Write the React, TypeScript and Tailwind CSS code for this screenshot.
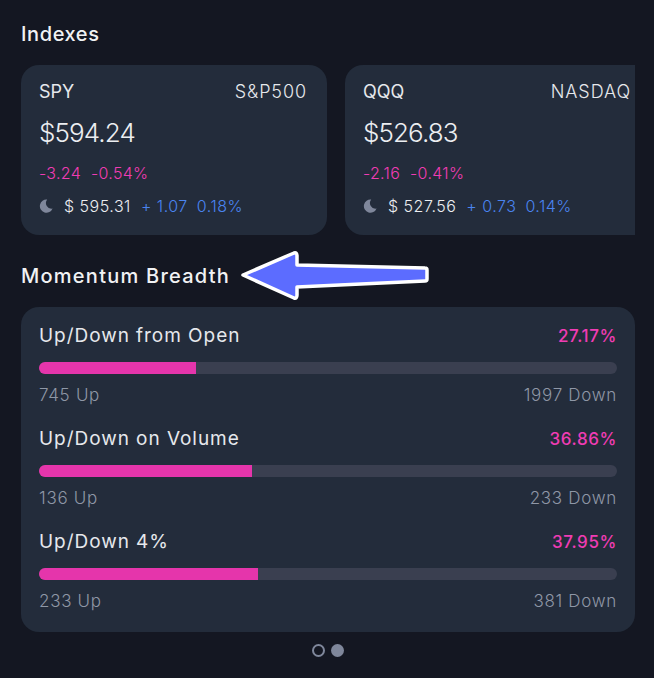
import React from 'react';

const indexes = [
  { symbol: 'SPY', name: 'S&P500', price: '$594.24', change: '-3.24', pct: '-0.54%', after: '$ 595.31', afterChange: '+ 1.07', afterPct: '0.18%' },
  { symbol: 'QQQ', name: 'NASDAQ', price: '$526.83', change: '-2.16', pct: '-0.41%', after: '$ 527.56', afterChange: '+ 0.73', afterPct: '0.14%' },
];

const breadth = [
  { label: 'Up/Down from Open', pct: '27.17%', width: 27.17, up: '745 Up', down: '1997 Down' },
  { label: 'Up/Down on Volume', pct: '36.86%', width: 36.86, up: '136 Up', down: '233 Down' },
  { label: 'Up/Down 4%', pct: '37.95%', width: 37.95, up: '233 Up', down: '381 Down' },
];

const MoonIcon = () => (
  <svg className="w-[14px] h-[14px] shrink-0" viewBox="0 0 14 14">
    <path d="M8.2 0.6 A6.6 6.6 0 1 0 13.6 9.6 A5.6 5.6 0 0 1 8.2 0.6 Z" fill="#7f879b" />
  </svg>
);

const IndexCard = ({ item }: { item: (typeof indexes)[number] }) => (
  <div className="w-[306px] h-[170px] shrink-0 rounded-[18px] bg-[#232c3b] pl-[18px] pr-[20px] pt-[15px]">
    <div className="flex justify-between text-[18px] leading-[24px] text-[#e6e8ec]">
      <span>{item.symbol}</span>
      <span className="font-light tracking-[0.9px]">{item.name}</span>
    </div>
    <div className="mt-[13px] text-[26px] leading-[32px] font-light tracking-[-0.9px] text-[#eceef1]">{item.price}</div>
    <div className="mt-[14px] flex gap-[10px] text-[16px] leading-[20px] font-light tracking-[0.3px] text-[#f03cb4]">
      <span>{item.change}</span>
      <span>{item.pct}</span>
    </div>
    <div className="mt-[13px] flex items-center text-[16px] leading-[20px] font-light tracking-[0.5px]">
      <MoonIcon />
      <span className="ml-[11px] text-[#eceef1]">{item.after}</span>
      <span className="ml-[10px] text-[#4a84f0]">{item.afterChange}</span>
      <span className="ml-[9px] text-[#4a84f0]">{item.afterPct}</span>
    </div>
  </div>
);

export default function App() {
  return (
    <div className="relative w-[654px] h-[678px] overflow-hidden bg-[#141722] font-['Inter',sans-serif]">
      <div className="pl-[21px] pr-[19px] pt-[21px]">
        <h2 className="text-[20px] leading-[26px] font-medium tracking-[0.6px] text-[#f1f2f4]">Indexes</h2>

        <div className="mt-[18px] flex gap-[18px] overflow-hidden">
          {indexes.map(item => <IndexCard key={item.symbol} item={item} />)}
        </div>

        <h2 className="mt-[28px] text-[20px] leading-[26px] font-medium tracking-[1.25px] text-[#f1f2f4]">Momentum Breadth</h2>

        <div className="mt-[18px] h-[325px] rounded-[18px] bg-[#232c3b] pl-[18px] pr-[18px] pt-[16px]">
          {breadth.map(row => (
            <div key={row.label} className="h-[103px]">
              <div className="flex justify-between text-[19px] leading-[24px] pt-[1px]">
                <span className="text-[#e6e8ec] tracking-[0.95px]">{row.label}</span>
                <span className="text-[17px] font-medium tracking-[0.6px] text-[#f03cb4]">{row.pct}</span>
              </div>
              <div className="mt-[14px] h-[12px] overflow-hidden rounded-full bg-[#3a3f50]">
                <div className="h-full bg-[#e535ab]" style={{ width: `${row.width}%` }} />
              </div>
              <div className="mt-[11px] flex justify-between text-[17px] leading-[20px] font-light tracking-[0.7px] text-[#8f97a6]">
                <span>{row.up}</span>
                <span>{row.down}</span>
              </div>
            </div>
          ))}
        </div>

        <div className="mt-[12px] flex justify-center gap-[6px]">
          <span className="w-[13px] h-[13px] rounded-full border-2 border-[#7f879b]" />
          <span className="w-[13px] h-[13px] rounded-full bg-[#7f879b]" />
        </div>
      </div>

      {/* annotation arrow */}
      <svg className="absolute left-[236px] top-[246px]" width="200" height="58" viewBox="0 0 200 58">
        <path
          d="M7 29 L58 7 Q61 6 61 10 L61 19 L189 22 Q191 22 191 24 L191 33 Q191 35 189 35 L61 41 L61 49 Q61 53 58 52 Z"
          fill="#5c6cff"
          stroke="#ffffff"
          strokeWidth="3.5"
          strokeLinejoin="round"
        />
      </svg>
    </div>
  );
}
